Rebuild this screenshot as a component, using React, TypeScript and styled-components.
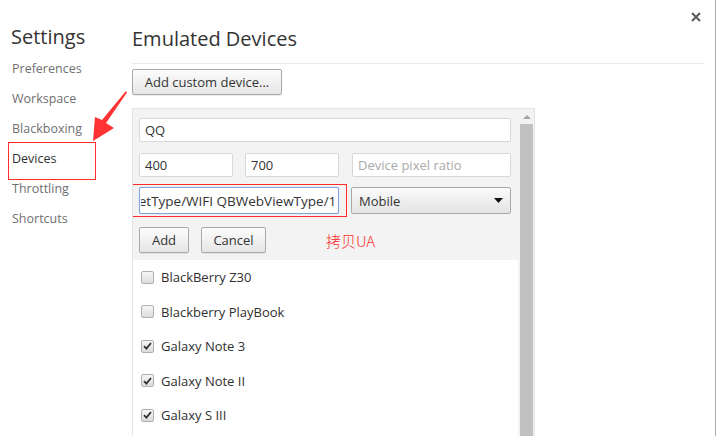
import React, { useLayoutEffect, useRef } from "react";
import styled, { createGlobalStyle, css } from "styled-components";

const Global = createGlobalStyle`
  html, body { margin: 0; padding: 0; background: #fff; }
  body { font-family: "Open Sans", "Noto Sans", sans-serif; }
  * { box-sizing: border-box; }
`;

const UI_FONT = `"Open Sans", "Noto Sans", sans-serif`;

const Page = styled.div`
  position: relative;
  width: 716px;
  height: 436px;
  overflow: hidden;
  display: flex;
  border-right: 1px solid #a9a9a9;
  font-family: ${UI_FONT};
`;

const Sidebar = styled.nav`
  width: 132px;
  flex: none;
  padding: 23px 0 0 11px;
  display: flex;
  flex-direction: column;
`;

const SideTitle = styled.h1`
  margin: 0 0 3px;
  font-size: 20px;
  line-height: 28px;
  font-weight: 400;
  color: #333;
`;

const NavItem = styled.div<{ $active?: boolean; $marked?: boolean }>`
  position: relative;
  height: 30px;
  line-height: 30px;
  padding-left: 1px;
  font-size: 12.5px;
  color: ${(p) => (p.$active ? "#303030" : "#707070")};
  ${(p) =>
    p.$marked &&
    css`
      &::after {
        content: "";
        position: absolute;
        left: -3px;
        top: -2px;
        width: 86px;
        height: 36px;
        border: 1px solid #ff2b2b;
      }
    `}
`;

const Content = styled.main`
  width: 572px;
  flex: none;
  display: flex;
  flex-direction: column;
`;

const Header = styled.header`
  height: 64px;
  flex: none;
  display: flex;
  justify-content: space-between;
  align-items: flex-start;
  border-bottom: 1px solid #e9e9e9;
`;

const Title = styled.h2`
  margin: 25px 0 0;
  font-size: 20px;
  line-height: 28px;
  font-weight: 400;
  color: #333;
`;

const CloseButton = styled.div`
  margin: 12px 3px 0 0;
  width: 10px;
  height: 10px;
  display: flex;
`;

const Button = styled.div<{ $w: number }>`
  width: ${(p) => p.$w}px;
  height: 26px;
  flex: none;
  display: flex;
  align-items: center;
  justify-content: center;
  border: 1px solid #aaa;
  border-radius: 2px;
  background: linear-gradient(#fcfcfc, #e6e6e6);
  box-shadow: 0 1px 1px rgba(0, 0, 0, 0.08);
  font-size: 13px;
  color: #333;
`;

const AddCustom = styled(Button)`
  margin-top: 5px;
`;

const Panel = styled.section`
  margin-top: 13px;
  width: 403px;
  flex: 1;
  display: flex;
  border: 1px solid #e4e4e4;
  border-bottom: none;
  background: #f3f3f3;
  overflow: hidden;
`;

const PanelMain = styled.div`
  flex: 1;
  display: flex;
  flex-direction: column;
`;

const Form = styled.div`
  padding: 9px 7px 7px 6px;
  display: flex;
  flex-direction: column;
`;

const Row = styled.div<{ $gap: number; $mb: number }>`
  display: flex;
  gap: ${(p) => p.$gap}px;
  margin-bottom: ${(p) => p.$mb}px;
  align-items: center;
`;

const Field = styled.div<{ $w?: number; $h?: number; $placeholder?: boolean }>`
  width: ${(p) => (p.$w ? `${p.$w}px` : "100%")};
  height: ${(p) => p.$h ?? 24}px;
  flex: none;
  display: flex;
  align-items: center;
  padding: 0 5px;
  border: 1px solid #d8d8d8;
  border-radius: 2px;
  background: #fff;
  font-size: 13px;
  color: ${(p) => (p.$placeholder ? "#a9a9a9" : "#333")};
  white-space: nowrap;
  overflow: hidden;
`;

const Marked = styled.div`
  position: relative;
  flex: none;
  display: flex;
  &::after {
    content: "";
    position: absolute;
    left: -11px;
    top: -3px;
    right: -8px;
    bottom: -3px;
    border: 1px solid #ff2b2b;
    pointer-events: none;
  }
`;

const UAInput = styled.input`
  width: 200px;
  height: 27px;
  margin: 0;
  padding: 0 2px 0 1px;
  border: 1px solid #7fa4dc;
  border-radius: 2px;
  box-shadow: 0 0 1px #9ab8e6;
  outline: none;
  background: #fff;
  font-family: ${UI_FONT};
  font-size: 13.5px;
  color: #333;
`;

const Select = styled.div`
  width: 160px;
  height: 27px;
  flex: none;
  display: flex;
  align-items: center;
  justify-content: space-between;
  padding: 0 7px 0 7px;
  border: 1px solid #a8a8a8;
  border-radius: 2px;
  background: linear-gradient(#fafafa, #e4e4e4);
  font-size: 13px;
  color: #333;
`;

const Note = styled.span`
  margin-left: 48px;
  font-family: "Noto Sans CJK SC", sans-serif;
  font-size: 15px;
  font-weight: 300;
  color: #ff2b2b;
`;

const List = styled.ul`
  flex: 1;
  margin: 0;
  padding: 0 0 0 8px;
  list-style: none;
  background: #fff;
`;

const Item = styled.li`
  height: 34.5px;
  display: flex;
  align-items: center;
  gap: 7px;
  font-size: 13px;
  color: #303030;
`;

const Box = styled.span`
  width: 13px;
  height: 13px;
  flex: none;
  display: flex;
  align-items: center;
  justify-content: center;
  border: 1px solid #b0b0b0;
  border-radius: 2px;
  background: linear-gradient(#f6f6f6, #dcdcdc);
`;

const Scrollbar = styled.div`
  width: 17px;
  flex: none;
  display: flex;
  flex-direction: column;
  align-items: center;
  padding-top: 6px;
`;

const Thumb = styled.div`
  margin-top: 5px;
  width: 13px;
  flex: 1;
  background: #c1c1c1;
`;

const Arrow = styled.svg`
  position: absolute;
  left: 0;
  top: 0;
  pointer-events: none;
`;

const devices = [
  { name: "BlackBerry Z30", on: false },
  { name: "Blackberry PlayBook", on: false },
  { name: "Galaxy Note 3", on: true },
  { name: "Galaxy Note II", on: true },
  { name: "Galaxy S III", on: true },
];

const UA =
  "Mozilla/5.0 (Linux; U; Android 5.0; zh-cn) AppleWebKit/537.36 (KHTML, like Gecko) Version/4.0 MQQBrowser/6.2 TBS/036215 Safari/537.36 V1_AND_SQ_6.5.0_390_YYB_D QQ/6.5.0.2835 NetType/WIFI QBWebViewType/1";

export default function App() {
  const uaRef = useRef<HTMLInputElement>(null);
  useLayoutEffect(() => {
    const el = uaRef.current;
    if (!el) return;
    const scroll = () => {
      el.scrollLeft = el.scrollWidth;
    };
    scroll();
    const t = setTimeout(scroll, 50);
    return () => clearTimeout(t);
  }, []);

  return (
    <>
      <Global />
      <Page>
        <Sidebar>
          <SideTitle>Settings</SideTitle>
          <NavItem>Preferences</NavItem>
          <NavItem>Workspace</NavItem>
          <NavItem>Blackboxing</NavItem>
          <NavItem $active $marked>Devices</NavItem>
          <NavItem>Throttling</NavItem>
          <NavItem>Shortcuts</NavItem>
        </Sidebar>
        <Content>
          <Header>
            <Title>Emulated Devices</Title>
            <CloseButton>
              <svg width="10" height="10" viewBox="0 0 10 10">
                <path d="M1 1L9 9M9 1L1 9" stroke="#5a5a5a" strokeWidth="2" />
              </svg>
            </CloseButton>
          </Header>
          <AddCustom $w={150}>Add custom device...</AddCustom>
          <Panel>
            <PanelMain>
              <Form>
                <Row $gap={0} $mb={11}>
                  <Field>QQ</Field>
                </Row>
                <Row $gap={12} $mb={10}>
                  <Field $w={94}>400</Field>
                  <Field $w={94}>700</Field>
                  <Field $w={159} $placeholder style={{ marginLeft: 1 }}>
                    Device pixel ratio
                  </Field>
                </Row>
                <Row $gap={12} $mb={13}>
                  <Marked>
                    <UAInput ref={uaRef} readOnly value={UA} />
                  </Marked>
                  <Select>
                    <span>Mobile</span>
                    <svg width="9" height="5" viewBox="0 0 9 5">
                      <path d="M0 0H9L4.5 5Z" fill="#111" />
                    </svg>
                  </Select>
                </Row>
                <Row $gap={12} $mb={0}>
                  <Button $w={50}>Add</Button>
                  <Button $w={65}>Cancel</Button>
                  <Note>拷贝UA</Note>
                </Row>
              </Form>
              <List>
                {devices.map((d) => (
                  <Item key={d.name}>
                    <Box>
                      {d.on && (
                        <svg width="9" height="8" viewBox="0 0 9 8">
                          <path d="M1 4.2L3.4 6.6L8 1" stroke="#333" strokeWidth="1.8" fill="none" />
                        </svg>
                      )}
                    </Box>
                    {d.name}
                  </Item>
                ))}
              </List>
            </PanelMain>
            <Scrollbar>
              <svg width="8" height="4" viewBox="0 0 8 4">
                <path d="M0 4H8L4 0Z" fill="#a3a3a3" />
              </svg>
              <Thumb />
            </Scrollbar>
          </Panel>
        </Content>
        <Arrow width="716" height="436" viewBox="0 0 716 436">
          <path d="M126 91L127 92.5L106 123L114 128L93 141L95 117L102 120Z" fill="#ff3333" />
        </Arrow>
      </Page>
    </>
  );
}
